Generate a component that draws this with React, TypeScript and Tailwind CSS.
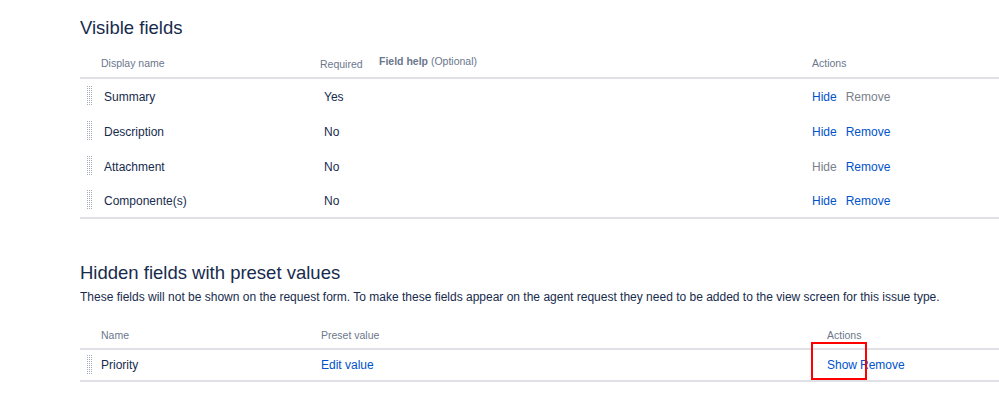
import React from 'react';

const font = { fontFamily: '"Liberation Sans", Arial, sans-serif' };

type Row = { name: string; required: string; hideOn: boolean; removeOn: boolean };

const visible: Row[] = [
  { name: 'Summary', required: 'Yes', hideOn: true, removeOn: false },
  { name: 'Description', required: 'No', hideOn: true, removeOn: true },
  { name: 'Attachment', required: 'No', hideOn: false, removeOn: true },
  { name: 'Componente(s)', required: 'No', hideOn: true, removeOn: true },
];

function DragHandle() {
  // dotted grip shown on the left of each row
  return (
    <svg width="6" height="21" viewBox="0 0 6 21" className="shrink-0 block">
      {Array.from({ length: 10 }).map((_, r) =>
        [0, 1, 2].map((c) => (
          <rect key={`${r}-${c}`} x={c * 2} y={r * 2} width="1" height="1" fill="#a5adba" />
        ))
      )}
    </svg>
  );
}

function Link({ on, children }: { on: boolean; children: React.ReactNode }) {
  return <span className={on ? 'text-[#0052cc]' : 'text-[#7a7f8a]'}>{children}</span>;
}

export default function App() {
  return (
    <div className="w-[999px] h-[403px] overflow-hidden bg-white pl-[80px] pt-[17px] text-[#172b4d]" style={font}>
      <h2 className="text-[18.5px] leading-[22px]">Visible fields</h2>

      <div className="mt-[21px]">
        <div className="flex items-end h-[19px] text-[10.5px] text-[#6b778c] border-b-2 border-[#dfe1e6]">
          <div className="w-[240px] pl-[21px] pb-[5px]">Display name</div>
          <div className="w-[59px] pb-[4px]">Required</div>
          <div className="w-[433px] pb-[7px]">
            <span className="font-bold">Field help</span> (Optional)
          </div>
          <div className="pb-[5px]">Actions</div>
        </div>
        {visible.map((r, i) => (
          <div
            key={r.name}
            className={`flex items-center h-[35px] text-[12px] leading-[18px] ${i === visible.length - 1 ? 'border-b-2 border-[#dfe1e6]' : ''}`}
          >
            <div className="w-[240px] flex items-center">
              <div className="pl-[7px] w-[24px]">
                <DragHandle />
              </div>
              <span>{r.name}</span>
            </div>
            <div className="w-[59px] pl-[4px]">{r.required}</div>
            <div className="w-[433px]" />
            <div className="flex gap-[9px]">
              <Link on={r.hideOn}>Hide</Link>
              <Link on={r.removeOn}>Remove</Link>
            </div>
          </div>
        ))}
      </div>

      <h2 className="mt-[43px] text-[18.5px] leading-[22px]">Hidden fields with preset values</h2>
      <p className="mt-[4px] text-[12px] leading-[18px]">
        These fields will not be shown on the request form. To make these fields appear on the agent request they need to be added to the view screen for this issue type.
      </p>

      <div className="mt-[26px]">
        <div className="flex items-end h-[18px] text-[10.5px] text-[#6b778c] border-b-2 border-[#dfe1e6]">
          <div className="w-[241px] pl-[21px] pb-[4px]">Name</div>
          <div className="w-[506px] pb-[4px]">Preset value</div>
          <div className="pb-[4px]">Actions</div>
        </div>
        <div className="flex items-center h-[32px] text-[12px] leading-[18px] border-b-2 border-[#dfe1e6]">
          <div className="w-[241px] flex items-center">
            <div className="pl-[7px] w-[21px]">
              <DragHandle />
            </div>
            <span>Priority</span>
          </div>
          <div className="w-[506px] text-[#0052cc]">Edit value</div>
          <div className="relative flex gap-[3px] text-[#0052cc]">
            <span>Show</span>
            <span>Remove</span>
            <div className="absolute left-[-16px] top-[-14px] w-[56px] h-[38px] border-2 border-[#ff0000]" />
          </div>
        </div>
      </div>
    </div>
  );
}
